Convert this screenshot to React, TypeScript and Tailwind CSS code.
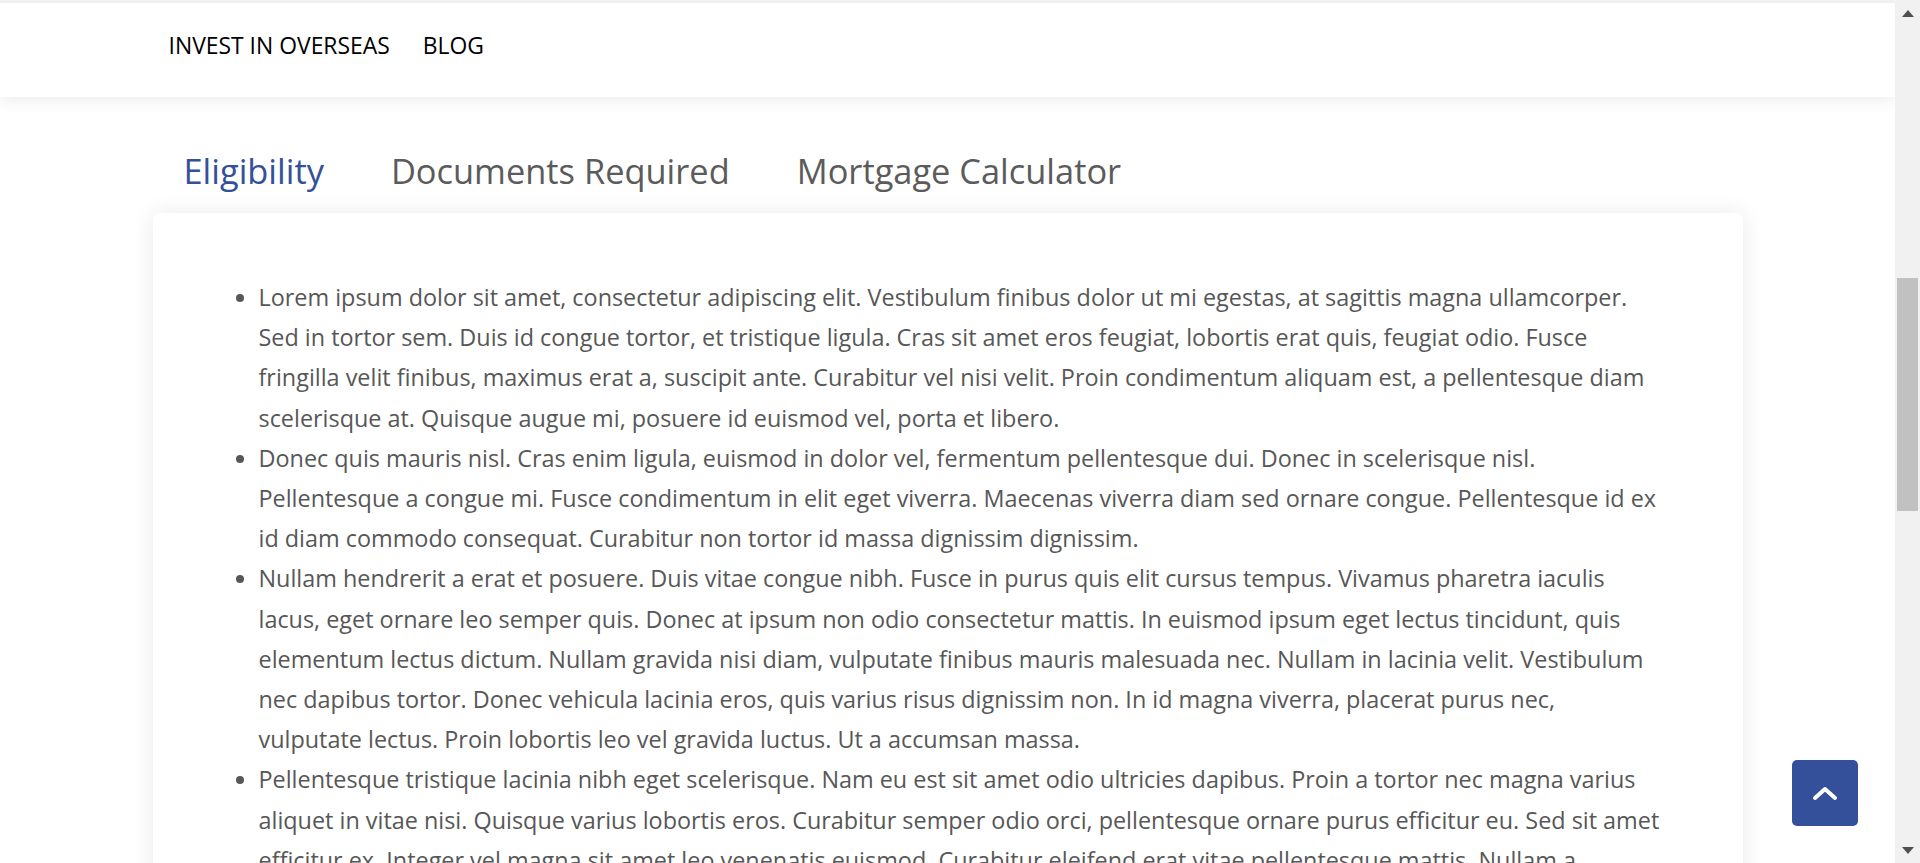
import React from "react";

const items = [
  "Lorem ipsum dolor sit amet, consectetur adipiscing elit. Vestibulum finibus dolor ut mi egestas, at sagittis magna ullamcorper. Sed in tortor sem. Duis id congue tortor, et tristique ligula. Cras sit amet eros feugiat, lobortis erat quis, feugiat odio. Fusce fringilla velit finibus, maximus erat a, suscipit ante. Curabitur vel nisi velit. Proin condimentum aliquam est, a pellentesque diam scelerisque at. Quisque augue mi, posuere id euismod vel, porta et libero.",
  "Donec quis mauris nisl. Cras enim ligula, euismod in dolor vel, fermentum pellentesque dui. Donec in scelerisque nisl. Pellentesque a congue mi. Fusce condimentum in elit eget viverra. Maecenas viverra diam sed ornare congue. Pellentesque id ex id diam commodo consequat. Curabitur non tortor id massa dignissim dignissim.",
  "Nullam hendrerit a erat et posuere. Duis vitae congue nibh. Fusce in purus quis elit cursus tempus. Vivamus pharetra iaculis lacus, eget ornare leo semper quis. Donec at ipsum non odio consectetur mattis. In euismod ipsum eget lectus tincidunt, quis elementum lectus dictum. Nullam gravida nisi diam, vulputate finibus mauris malesuada nec. Nullam in lacinia velit. Vestibulum nec dapibus tortor. Donec vehicula lacinia eros, quis varius risus dignissim non. In id magna viverra, placerat purus nec, vulputate lectus. Proin lobortis leo vel gravida luctus. Ut a accumsan massa.",
  "Pellentesque tristique lacinia nibh eget scelerisque. Nam eu est sit amet odio ultricies dapibus. Proin a tortor nec magna varius aliquet in vitae nisi. Quisque varius lobortis eros. Curabitur semper odio orci, pellentesque ornare purus efficitur eu. Sed sit amet efficitur ex. Integer vel magna sit amet leo venenatis euismod. Curabitur eleifend erat vitae pellentesque mattis. Nullam a consectetur ligula, vitae fermentum tortor. Aenean at nunc vel lorem fringilla maximus.",
];

export default function App() {
  return (
    <div className="flex h-[863px] w-full overflow-hidden bg-white font-['Open_Sans',sans-serif]">
      <div className="relative flex min-w-0 flex-1 flex-col overflow-hidden">
        <div className="h-[3px] w-full shrink-0 bg-[#f3f3f3]" />
        <header className="relative z-10 flex h-[94px] w-full shrink-0 items-center bg-white shadow-[0_4px_14px_rgba(0,0,0,0.07)]">
          <nav className="mx-auto flex w-[1590px] items-center gap-[33px] pb-[8px] pl-[16px] text-[22.9px] text-black">
            <span>INVEST IN OVERSEAS</span>
            <span>BLOG</span>
          </nav>
        </header>
        <main className="mx-auto flex w-[1590px] shrink-0 flex-col">
          <div className="flex shrink-0 items-center gap-[67px] pl-[31px] pt-[48px] pb-[16px] text-[34.4px] font-medium leading-[52px] text-[#5b5b5b]">
            <span className="text-[#34509b]">Eligibility</span>
            <span>Documents Required</span>
            <span>Mortgage Calculator</span>
          </div>
          <div className="shrink-0 rounded-[6px] bg-white pl-[80px] pr-[82px] pt-[64px] pb-[40px] shadow-[0_0_22px_rgba(0,0,0,0.09)]">
            <ul className="list-disc pl-[26px] text-[23.4px] font-medium leading-[40.2px] text-[#575757]">
              {items.map((t, i) => (
                <li key={i} className="marker:text-[#575757]">
                  {t}
                </li>
              ))}
            </ul>
          </div>
        </main>
        <button className="absolute left-[1792px] top-[760px] flex h-[66px] w-[66px] items-center justify-center rounded-[5px] bg-[#34509a]">
          <svg width="26" height="16" viewBox="0 0 26 16" fill="none">
            <path d="M3 13 L13 4 L23 13" stroke="white" strokeWidth="4" strokeLinecap="round" strokeLinejoin="round" />
          </svg>
        </button>
      </div>
      <div className="flex w-[25px] shrink-0 flex-col items-center bg-[#f1f1f1]">
        <div className="flex h-[26px] w-full shrink-0 items-center justify-center">
          <svg width="12" height="7" viewBox="0 0 12 7"><path d="M6 0 L12 7 L0 7 Z" fill="#505050" /></svg>
        </div>
        <div className="mt-[252px] h-[233px] w-[21px] shrink-0 bg-[#c1c1c1]" />
        <div className="flex-1" />
        <div className="flex h-[26px] w-full shrink-0 items-center justify-center">
          <svg width="12" height="7" viewBox="0 0 12 7"><path d="M0 0 L12 0 L6 7 Z" fill="#505050" /></svg>
        </div>
      </div>
    </div>
  );
}
